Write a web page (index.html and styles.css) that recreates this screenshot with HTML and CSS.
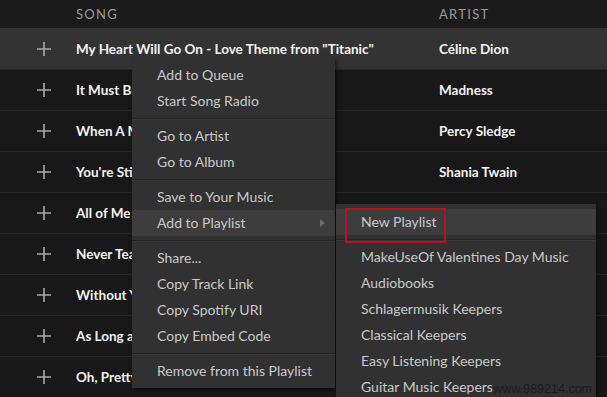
FILE: index.html
```html
<!DOCTYPE html>
<html lang="en">
<head>
    <meta charset="UTF-8">
    <title>Playlist</title>
    <link rel="stylesheet" href="styles.css">
</head>
<body>
    <div class="tracklist">
        <div class="track-head">
            <span class="col-add"></span>
            <span class="col-song">Song</span>
            <span class="col-artist">Artist</span>
        </div>

        <div class="track selected">
            <span class="col-add"><svg class="plus" viewBox="0 0 14 14"><path d="M7 0V14M0 7H14"/></svg></span>
            <span class="col-song">My Heart Will Go On - Love Theme from "Titanic"</span>
            <span class="col-artist">Céline Dion</span>
        </div>
        <div class="track">
            <span class="col-add"><svg class="plus" viewBox="0 0 14 14"><path d="M7 0V14M0 7H14"/></svg></span>
            <span class="col-song">It Must Be Love</span>
            <span class="col-artist">Madness</span>
        </div>
        <div class="track">
            <span class="col-add"><svg class="plus" viewBox="0 0 14 14"><path d="M7 0V14M0 7H14"/></svg></span>
            <span class="col-song">When A Man Loves A Woman</span>
            <span class="col-artist">Percy Sledge</span>
        </div>
        <div class="track">
            <span class="col-add"><svg class="plus" viewBox="0 0 14 14"><path d="M7 0V14M0 7H14"/></svg></span>
            <span class="col-song">You're Still The One</span>
            <span class="col-artist">Shania Twain</span>
        </div>
        <div class="track">
            <span class="col-add"><svg class="plus" viewBox="0 0 14 14"><path d="M7 0V14M0 7H14"/></svg></span>
            <span class="col-song">All of Me</span>
            <span class="col-artist"></span>
        </div>
        <div class="track">
            <span class="col-add"><svg class="plus" viewBox="0 0 14 14"><path d="M7 0V14M0 7H14"/></svg></span>
            <span class="col-song">Never Tear Us Apart</span>
            <span class="col-artist"></span>
        </div>
        <div class="track">
            <span class="col-add"><svg class="plus" viewBox="0 0 14 14"><path d="M7 0V14M0 7H14"/></svg></span>
            <span class="col-song">Without You</span>
            <span class="col-artist"></span>
        </div>
        <div class="track">
            <span class="col-add"><svg class="plus" viewBox="0 0 14 14"><path d="M7 0V14M0 7H14"/></svg></span>
            <span class="col-song">As Long as You Love Me</span>
            <span class="col-artist"></span>
        </div>
        <div class="track">
            <span class="col-add"><svg class="plus" viewBox="0 0 14 14"><path d="M7 0V14M0 7H14"/></svg></span>
            <span class="col-song">Oh, Pretty Woman</span>
            <span class="col-artist"></span>
        </div>
    </div>

    <!-- Context menu for the selected track -->
    <ul class="menu context-menu">
        <li class="menu-item">Add to Queue</li>
        <li class="menu-item">Start Song Radio</li>
        <li class="menu-sep"></li>
        <li class="menu-item">Go to Artist</li>
        <li class="menu-item">Go to Album</li>
        <li class="menu-sep"></li>
        <li class="menu-item">Save to Your Music</li>
        <li class="menu-item active has-sub">Add to Playlist
            <span class="arrow"></span>
            <ul class="menu submenu">
                <li class="menu-item active"><span class="mark"></span>New Playlist</li>
                <li class="menu-sep"></li>
                <li class="menu-item">MakeUseOf Valentines Day Music</li>
                <li class="menu-item">Audiobooks</li>
                <li class="menu-item">Schlagermusik Keepers</li>
                <li class="menu-item">Classical Keepers</li>
                <li class="menu-item">Easy Listening Keepers</li>
                <li class="menu-item">Guitar Music Keepers</li>
            </ul>
        </li>
        <li class="menu-sep"></li>
        <li class="menu-item">Share...</li>
        <li class="menu-item">Copy Track Link</li>
        <li class="menu-item">Copy Spotify URI</li>
        <li class="menu-item">Copy Embed Code</li>
        <li class="menu-sep"></li>
        <li class="menu-item">Remove from this Playlist</li>
    </ul>

    <div class="watermark">www.989214.com</div>
</body>
</html>
```

FILE: styles.css
```css
body {
    margin: 0;
    width: 607px;
    height: 397px;
    overflow: hidden;
    position: relative;
    background: #181818;
    font-family: 'Lato', 'Liberation Sans', sans-serif;
    color: #eee;
}

.tracklist {
    display: flex;
    flex-direction: column;
}

.track-head, .track {
    display: grid;
    grid-template-columns: 76px 363px 1fr;
    align-items: center;
}

.track-head {
    height: 28px;
    background: #1b1b1b;
    color: #9a9a9a;
    font-size: 13px;
    text-transform: uppercase;
    letter-spacing: 1.3px;
}

.track {
    height: 40px;
    border-top: 1px solid #262626;
    font-size: 13.5px;
    font-weight: bold;
    color: #f2f2f2;
    white-space: nowrap;
}

.track.selected {
    background: #333;
    border-top-color: #333;
}

.col-add {
    display: flex;
    justify-content: center;
    padding-left: 12px;
}

.plus {
    width: 14px;
    height: 14px;
    stroke: #a8a8a8;
    stroke-width: 1.6;
    fill: none;
}

/* Menus */
.menu {
    list-style: none;
    margin: 0;
    background: #313131;
    color: #c9c9c9;
    font-size: 14px;
    box-shadow: 2px 2px 4px rgba(0, 0, 0, 0.5);
}

.context-menu {
    position: absolute;
    left: 132px;
    top: 57px;
    width: 203px;
    padding: 5px 0 4px;
}

.submenu {
    position: absolute;
    left: 204px;
    top: -6px;
    width: 260px;
    padding: 5px 0 0;
}

.menu-item {
    position: relative;
    height: 26px;
    line-height: 26px;
    padding-left: 25px;
    white-space: nowrap;
}

.menu-item.active {
    background: #3d3d3d;
}

.menu-sep {
    height: 1px;
    margin: 4px 0 3px;
    background: #262626;
    border-bottom: 1px solid #383838;
}

.arrow {
    position: absolute;
    right: 10px;
    top: 9px;
    border-left: 5px solid #6a6a6a;
    border-top: 4px solid transparent;
    border-bottom: 4px solid transparent;
}

.mark {
    position: absolute;
    left: 9px;
    top: -1px;
    width: 97px;
    height: 31px;
    border: 2px solid #b5141d;
}

.watermark {
    position: absolute;
    right: 15px;
    bottom: 1px;
    font-family: 'Liberation Sans', sans-serif;
    font-size: 12.5px;
    color: #1c1c1c;
}
```
